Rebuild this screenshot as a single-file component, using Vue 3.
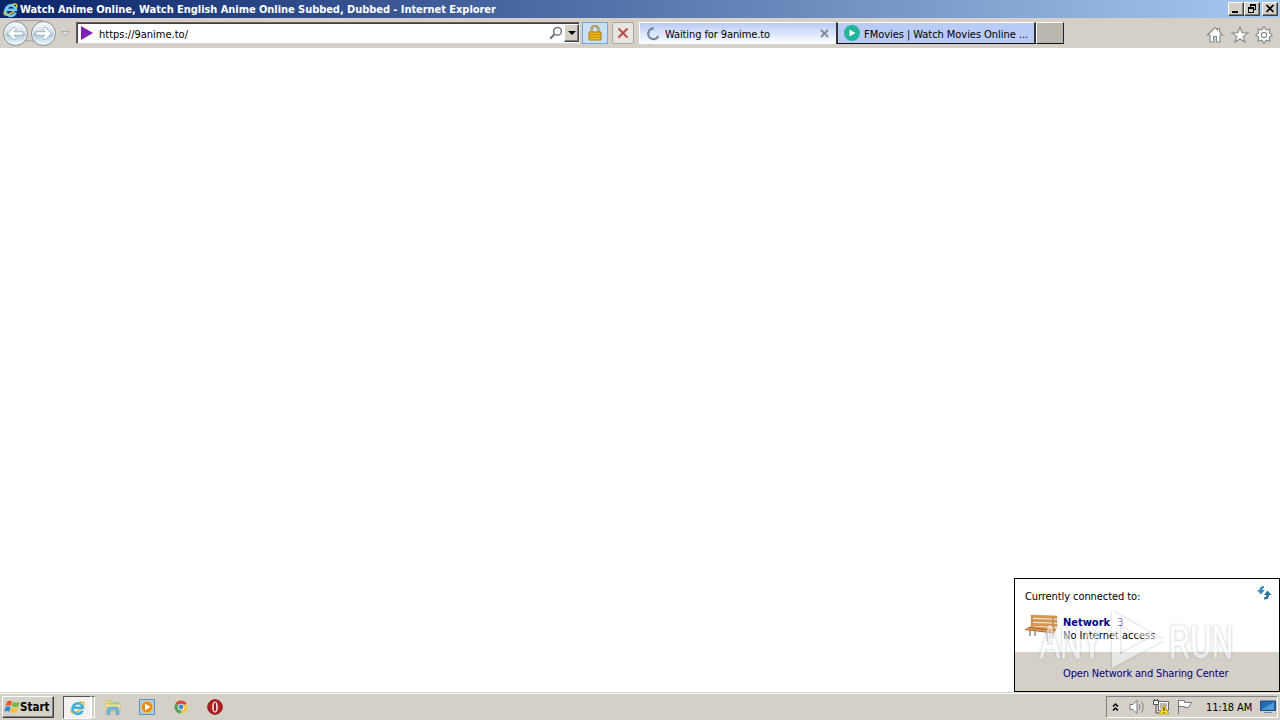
<template>
  <div class="desktop">
    <header class="titlebar">
      <svg class="title-logo" viewBox="0 0 18 18">
        <ellipse cx="9" cy="9" rx="8.2" ry="3.6" transform="rotate(-38 9 9)" fill="none" stroke="#f2c62e" stroke-width="1.6" />
        <path d="M14.500 12.200A5.600 5.600 0 1 1 14.800 9.200H5.200" fill="none" stroke="#6ccdf5" stroke-width="2.700" />
      </svg>
      <span class="title-text">Watch Anime Online, Watch English Anime Online Subbed, Dubbed - Internet Explorer</span>
      <div class="window-buttons">
        <button class="win-btn"><svg viewBox="0 0 14 12"><path d="M3 8h6v2H3z" /></svg></button>
        <button class="win-btn"><svg viewBox="0 0 14 12"><path d="M5 1h6v6H9V6h1V3H6v1H5zM3 4h6v6H3zm1 2v3h4V6z" fill-rule="evenodd" /></svg></button>
        <button class="win-btn close"><svg viewBox="0 0 14 12"><path d="M3.500 2l7 7M10.500 2l-7 7" stroke="#000" stroke-width="1.700" /></svg></button>
      </div>
    </header>

    <nav class="toolbar">
      <svg class="nav-arrows" viewBox="0 0 76 30">
        <defs>
          <linearGradient id="orb" x1="0" y1="0" x2="0" y2="1">
            <stop offset="0" stop-color="#f6f9fa" />
            <stop offset=".45" stop-color="#d5dfe7" />
            <stop offset=".52" stop-color="#a9c3d6" />
            <stop offset="1" stop-color="#e6fbff" />
          </linearGradient>
        </defs>
        <path d="M15 2.500H43M15 27Q29 18 43 27" fill="none" stroke="#a5a4a4" />
        <g v-for="x in [15.5, 43.5]" :key="x">
          <circle :cx="x" cy="15.500" r="12" fill="#f3f8fa" stroke="#82898f" />
          <circle :cx="x" cy="15.500" r="10.400" fill="url(#orb)" />
        </g>
        <path d="M7.500 15.500l6.500-6.500 2.500 2-2.500 2.700h9v3.600h-9l2.500 2.700-2.500 2z" fill="#fff" stroke="#8fa8ba" stroke-width=".8" />
        <path d="M51.500 15.500L45 9l-2.500 2 2.500 2.700h-9v3.600h9L42.500 20l2.500 2z" fill="#fff" stroke="#8fa8ba" stroke-width=".8" />
        <path d="M61.500 13.500h8L65.500 18z" fill="#e6e4e0" stroke="#aaa7a2" />
      </svg>
      <div class="address">
        <svg class="site-icon" viewBox="0 0 14 14"><path d="M1 0L13 7 1 14z" fill="#7f1fb5" /></svg>
        <span class="url">https://9anime.to/</span>
        <svg class="search" viewBox="0 0 14 14"><circle cx="8.500" cy="5.300" r="3.900" fill="none" stroke="#777" stroke-width="1.500" /><path d="M5.500 8.300L1.200 12.600" stroke="#777" stroke-width="2.200" /></svg>
        <span class="dropdown"><svg viewBox="0 0 8 4"><path d="M0 0h8L4 4z" /></svg></span>
      </div>
      <span class="tool lock">
        <svg viewBox="0 0 14 16"><path d="M3.500 7V4a3.500 3 0 0 1 7 0V7" fill="none" stroke="#8f7434" stroke-width="2" /><path d="M3.500 7V4a3.500 3 0 0 1 7 0V7" fill="none" stroke="#e3cc7a" stroke-width=".8" /><path d="M1 7h12v8H1z" fill="#efb719" stroke="#a87c10" /><path d="M1 9.500h12M1 12h12" stroke="#c48f12" /></svg>
      </span>
      <span class="tool stop">
        <svg viewBox="0 0 12 12"><path d="M1.500 1.500l9 9M10.500 1.500l-9 9" stroke="#bf4a45" stroke-width="2" /></svg>
      </span>
      <div class="tab active">
        <svg class="spinner" viewBox="0 0 14 14"><path d="M8 1.500A5.300 5.300 0 1 0 12.300 9" fill="none" stroke="#7089a5" stroke-width="2.200" /></svg>
        <span class="tab-text waiting">Waiting for 9anime.to</span>
        <svg class="tab-close" viewBox="0 0 9 9"><path d="M1 1l7 7M8 1L1 8" stroke="#808998" stroke-width="1.800" /></svg>
      </div>
      <div class="tab other">
        <svg class="movie-icon" viewBox="0 0 16 16"><circle cx="8" cy="8" r="8" fill="#22b496" /><path d="M5.500 4.500L11.500 8l-6 3.500z" fill="#fff" /></svg>
        <span class="tab-text movies">FMovies | Watch Movies Online ...</span>
      </div>
      <div class="new-tab"></div>
      <div class="commands">
        <svg viewBox="0 0 18 18"><path d="M1.500 9L9 1.500l2.500 2.400V2.500h2v3.300L16.500 9H14v7h-3.500v-5.500h-3V16H4V9z" /></svg>
        <svg viewBox="0 0 18 18"><path d="M9 1.200l2.100 5.500 5.700.2-4.500 3.500 1.600 5.700L9 12.800l-4.900 3.300 1.600-5.700L1.200 6.900l5.700-.2z" /></svg>
        <svg viewBox="0 0 18 18">
          <path :d="gearPath" />
          <circle cx="9" cy="9" r="2.600" />
        </svg>
      </div>
    </nav>

    <main class="page"></main>

    <footer class="taskbar">
      <button class="start">
        <svg viewBox="0 0 16 16">
          <path d="M3 2.500Q5 .8 8 2.500L6.800 7Q4.400 5.700 1.700 7z" fill="#e65b25" />
          <path d="M9 3Q12 4.500 15.500 3l-1.300 4.500Q11 8.600 7.800 7.300z" fill="#70b843" />
          <path d="M1.500 8Q4 6.700 6.600 8l-1.200 4.700Q3 11.500.2 12.700z" fill="#3389cf" />
          <path d="M7.600 8.500Q10.500 10 14 8.500l-1.300 4.600Q9.500 14.500 6.400 13z" fill="#f5c52b" />
        </svg>
        <span class="start-text">Start</span>
      </button>
      <div class="ie-task">
        <svg viewBox="0 0 18 18">
          <ellipse cx="9" cy="9" rx="8.200" ry="3.600" transform="rotate(-38 9 9)" fill="none" stroke="#e9b52b" stroke-width="1.500" />
          <path d="M14.500 12.200A5.600 5.600 0 1 1 14.800 9.200H5.200" fill="none" stroke="#43aee2" stroke-width="2.600" />
        </svg>
      </div>
      <div class="ie-stack"></div>
      <div class="launchers">
        <svg viewBox="0 0 18 18"><path d="M2 2.500h5l1 2h8v9H2z" fill="#f4dd7d" stroke="#d0b75c" stroke-width=".8" /><path d="M4 4.500h11v2H4z" fill="#96cfa0" /><path d="M2 7h14v6H2z" fill="#f8e795" /><path d="M3 16.500V11q0-2 2-2h8q2 0 2 2v5.500h-3V12H6v4.500z" fill="#74b8df" stroke="#5697be" stroke-width=".6" /></svg>
        <svg viewBox="0 0 18 18"><path d="M1.500 1.500h15v15h-15z" fill="#a9cfea" stroke="#5b91bb" /><circle cx="9" cy="9" r="5.800" fill="#f18a13" stroke="#f7bd69" /><path d="M7 5.500L12.500 9 7 12.500z" fill="#fff" /></svg>
        <svg viewBox="0 0 18 18"><path d="M9 9L3.370 5.750A6.500 6.500 0 0 1 14.630 5.750z" fill="#dd473b" /><path d="M9 9L14.630 5.750A6.500 6.500 0 0 1 9 15.500z" fill="#f5ca38" /><path d="M9 9V15.500A6.500 6.500 0 0 1 3.370 5.750z" fill="#48a65a" /><circle cx="9" cy="9" r="3.300" fill="#eee" /><circle cx="9" cy="9" r="2.400" fill="#4384d4" /></svg>
        <svg viewBox="0 0 18 18"><circle cx="9" cy="9" r="7.300" fill="#b51e20" stroke="#811719" /><ellipse cx="9" cy="9" rx="2.800" ry="5.500" fill="#fff" /><ellipse cx="9" cy="9" rx="1.300" ry="4.600" fill="#a31719" /></svg>
      </div>
      <div class="tray">
        <svg class="chevrons" viewBox="0 0 7 9"><path d="M1 3.500L3.500 1 6 3.500M1 7.500L3.500 5 6 7.500" fill="none" stroke="#000" stroke-width="1.500" /></svg>
        <svg class="speaker" viewBox="0 0 18 18"><path d="M2 6.500h3L9 2.500v13l-4-4H2z" fill="#fff" stroke="#777" /><path d="M11 6q2 3 0 6M13.500 3.500q3.500 5.500 0 11" fill="none" stroke="#858585" /></svg>
        <svg class="network-icon" viewBox="0 0 18 18"><path d="M6.500 3.500h10v9h-10z" fill="#fff" stroke="#666" /><path d="M8 5h7v6H8z" fill="#bbb9b5" /><path d="M1.500 2.500h5v4h-5z" fill="#fff" stroke="#555" /><path d="M4 7v8h3M2.500 1v2M5.500 1v2" fill="none" stroke="#555" /><path d="M12 7l5 9H7z" fill="#ffdc28" stroke="#b89414" stroke-width=".7" /><path d="M12 9.500v3.500M12 14v1" stroke="#333" stroke-width="1.200" /></svg>
        <svg class="flag" viewBox="0 0 18 18"><path d="M2.500 2v14M2.500 2.500h6v2h7l-3 5h-4v-1h-6z" fill="#fff" stroke="#777" /></svg>
        <time class="clock">11:18 AM</time>
        <svg class="desktop-icon" viewBox="0 0 16 14"><path d="M.5 1h15v9.500H.5z" fill="#236cb4" stroke="#1f477d" /><path d="M1 10l13-8v8z" fill="#4c99d5" /><path d="M4 12h8v1H4z" fill="#718ba8" /></svg>
      </div>
    </footer>

    <aside class="popup">
      <div class="popup-main">
        <div class="popup-heading">
          <span class="connected">Currently connected to:</span>
          <svg class="refresh" viewBox="0 0 16 16"><path d="M8 1Q3.500 1 3.500 5H1l4 4.500L9 5H6.500Q6.500 3 8 3z" fill="#3e8fc0" /><path d="M8 14.500q5 0 5-4.500h2.500l-4-4.500L8 10h2.500q0 2-2.500 2.500z" fill="#2b7198" /></svg>
        </div>
        <div class="connection">
          <svg class="bench" viewBox="0 0 34 30">
            <path d="M7 3v10M28 4v21M5 17v6M10 18v5M22 19v9" stroke="#858585" stroke-width="1.400" />
            <path d="M6 2l26 1v2.500L6 4.500zm0 4l26 1v2.500L6 8.500zm0 4l26 1v2.500L6 12.500z" fill="#d8974f" stroke="#b97735" stroke-width=".4" />
            <path d="M6 13l26 2-3 5L0 16z" fill="#dd9a4d" />
            <path d="M3 14.500l27 3M0 16.500l29 3.500" stroke="#a9632a" stroke-width="1.200" />
          </svg>
          <div class="connection-text">
            <div class="network-name"><b>Network</b><span class="network-number">3</span></div>
            <div class="access">No Internet access</div>
          </div>
        </div>
      </div>
      <div class="popup-footer"><span class="sharing">Open Network and Sharing Center</span></div>
      <svg class="watermark" viewBox="0 0 194 62">
        <text x="0" y="50" textLength="62" lengthAdjust="spacingAndGlyphs">ANY</text>
        <path d="M72 3L124 32 72 60zM80 17v29l26-14z" />
        <text x="129" y="50" textLength="64" lengthAdjust="spacingAndGlyphs">RUN</text>
      </svg>
    </aside>
  </div>
</template>

<script setup>
const gearPoints = []
for (let i = 0; i < 32; i++) {
  const r = i % 4 < 2 ? 7.9 : 5.8
  const a = (i / 16) * Math.PI - 0.1
  gearPoints.push(`${(9 + Math.cos(a) * r).toFixed(2)} ${(9 + Math.sin(a) * r).toFixed(2)}`)
}
const gearPath = `M${gearPoints.join('L')}Z`
</script>

<style>
body {
  margin: 0;
  overflow: hidden;
}
</style>

<style scoped>
.desktop {
  position: relative;
  display: flex;
  flex-direction: column;
  width: 1280px;
  height: 720px;
  background: #fff;
  color: #000;
  font: 11px/13px "DejaVu Sans Condensed", "DejaVu Sans", sans-serif;
  font-stretch: condensed;
  white-space: nowrap;
}

svg {
  display: block;
  flex: none;
  overflow: visible;
}

button {
  box-sizing: border-box;
  margin: 0;
  padding: 0;
  font: inherit;
}

.titlebar {
  display: flex;
  align-items: center;
  height: 18px;
  padding: 0 2px;
  background: linear-gradient(90deg, #0a246a, #a6caf0);
  color: #fff;
  font-weight: bold;
}

.title-logo {
  width: 17px;
  height: 17px;
  margin-right: 1px;
}

.title-text {
  letter-spacing: -0.05px;
}

.window-buttons {
  display: flex;
  margin-left: auto;
}

.win-btn {
  width: 16px;
  height: 14px;
  border: 1px solid;
  border-color: #fff #404040 #404040 #fff;
  background: #d4d0c8;
  box-shadow: inset -1px -1px #808080;
}

.win-btn svg {
  width: 14px;
  height: 12px;
}

.close {
  margin-left: 2px;
}

.toolbar {
  display: flex;
  align-items: center;
  height: 30px;
  background: #d4d0c8;
}

.nav-arrows {
  width: 76px;
  height: 30px;
}

.address {
  display: flex;
  align-items: center;
  box-sizing: border-box;
  width: 504px;
  height: 22px;
  padding: 0 0 0 3px;
  border: 1px solid;
  border-color: #655f62 #eee #d9d4ce #655f62;
  box-shadow: inset 1px 1px #404040;
  background: #fff;
}

.site-icon {
  width: 14px;
  height: 14px;
  margin-right: 5px;
}

.url,
.movies {
  padding-top: 2px;
}

.waiting {
  padding-top: 1px;
  letter-spacing: -0.1px;
}

.search {
  width: 14px;
  height: 14px;
  margin: 0 1px 0 auto;
}

.dropdown {
  display: grid;
  place-items: center;
  box-sizing: border-box;
  width: 15px;
  height: 18px;
  border: 1px solid;
  border-color: #fff #404040 #404040 #fff;
  background: #d4d0c8;
  box-shadow: inset -1px -1px #808080;
}

.dropdown svg {
  width: 8px;
  height: 4px;
}

.tool {
  display: grid;
  place-items: center;
  box-sizing: border-box;
  height: 22px;
  border: 1px solid #aaa8a4;
}

.lock {
  width: 26px;
  margin-left: 2px;
  border-color: #74a7dc;
  background: #c9dff5;
}

.lock svg {
  width: 14px;
  height: 16px;
}

.stop {
  width: 22px;
  margin: 0 5px 0 4px;
  border-radius: 2px;
  background: #e7e5e2;
}

.stop svg {
  width: 12px;
  height: 12px;
}

.tab {
  display: flex;
  align-items: center;
  box-sizing: border-box;
  height: 22px;
  border-top: 1px solid #fff;
  border-left: 1px solid #fff;
}

.active {
  width: 197px;
  padding: 0 7px 0 6px;
  background: linear-gradient(#b8caf6, #fff);
}

.spinner {
  width: 14px;
  height: 14px;
  margin-right: 5px;
}

.tab-close {
  width: 9px;
  height: 9px;
  margin-left: auto;
}

.other {
  width: 200px;
  padding-left: 6px;
  border-right: 2px solid #333;
  border-bottom: 1px solid #111;
  border-left: 2px solid #333;
  background: #b9cbf7;
}

.movie-icon {
  width: 16px;
  height: 16px;
  margin-right: 4px;
}

.movies {
  letter-spacing: -0.05px;
}

.new-tab {
  box-sizing: border-box;
  width: 28px;
  height: 22px;
  border: 1px solid;
  border-color: #fff #222 #111 #fff;
  background: #bab6b0;
}

.commands {
  display: flex;
  gap: 6.5px;
  margin: 4px 7px 0 auto;
}

.commands svg {
  width: 18px;
  height: 18px;
  fill: #fff;
  stroke: #8c8c8c;
  stroke-width: 1.2;
}

.page {
  flex: 1;
}

.taskbar {
  display: flex;
  align-items: center;
  box-sizing: border-box;
  height: 28px;
  padding: 1px 2px 0;
  border-top: 1px solid #d4d0c8;
  background: #d4d0c8;
  box-shadow: inset 0 1px #fff;
}

.start {
  display: flex;
  align-items: center;
  width: 52px;
  height: 22px;
  padding-left: 1px;
  border: 1px solid;
  border-color: #fff #404040 #404040 #fff;
  background: #d4d0c8;
  box-shadow: inset -1px -1px #808080;
  font-weight: bold;
}

.start svg {
  width: 16px;
  height: 16px;
}

.start-text {
  font-size: 11.5px;
}

.ie-task {
  display: grid;
  place-items: center;
  box-sizing: border-box;
  width: 28px;
  height: 23px;
  margin-left: 9px;
  border: 1px solid;
  border-color: #555 #fff #fff #555;
  background: #f4f2f0;
}

.ie-task svg {
  width: 17px;
  height: 17px;
}

.ie-stack {
  box-sizing: border-box;
  width: 4px;
  height: 22px;
  border: 1px solid #fff;
  border-top-color: #555;
}

.launchers {
  display: flex;
  gap: 16px;
  margin-left: 9px;
}

.launchers svg {
  width: 18px;
  height: 18px;
}

.tray {
  display: flex;
  align-items: center;
  box-sizing: border-box;
  width: 172px;
  height: 22px;
  margin-left: auto;
  padding: 0 1px 0 5px;
  border: 1px solid;
  border-color: #808080 #fff #fff #808080;
}

.chevrons {
  width: 7px;
  height: 9px;
}

.speaker {
  width: 18px;
  height: 18px;
  margin-left: 9px;
}

.network-icon {
  width: 18px;
  height: 18px;
  margin-left: 6px;
}

.flag {
  width: 18px;
  height: 18px;
  margin-left: 6px;
}

.clock {
  margin-left: 12px;
  letter-spacing: -0.1px;
}

.desktop-icon {
  width: 16px;
  height: 14px;
  margin-left: auto;
}

.popup {
  position: absolute;
  top: 578px;
  left: 1014px;
  display: flex;
  flex-direction: column;
  box-sizing: border-box;
  width: 266px;
  height: 114px;
  border: 1px solid #000;
  background: #fff;
}

.popup-main {
  box-sizing: border-box;
  height: 73px;
  padding: 6px 7px 0 10px;
}

.popup-heading {
  display: flex;
  align-items: center;
  justify-content: space-between;
  height: 22px;
}

.connected {
  letter-spacing: -0.08px;
}

.refresh {
  width: 16px;
  height: 16px;
  margin-bottom: 6px;
}

.connection {
  display: flex;
  margin-top: 6px;
}

.bench {
  width: 34px;
  height: 30px;
}

.connection-text {
  padding: 3px 0 0 4px;
}

.network-name {
  display: flex;
  gap: 7px;
  color: #000080;
}

.popup-footer {
  flex: 1;
  padding: 15px 0 0 48px;
  background: #d4d0c8;
  color: #000080;
}

.sharing {
  letter-spacing: -0.16px;
}

.watermark {
  position: absolute;
  top: 29px;
  left: 25px;
  width: 194px;
  height: 62px;
  fill: #fff;
  fill-rule: evenodd;
  font: 46px "Liberation Sans", sans-serif;
  opacity: 0.5;
  filter: drop-shadow(0 0 1.5px #888);
}

.watermark text {
  stroke: #fff;
  stroke-width: 1px;
}
</style>
